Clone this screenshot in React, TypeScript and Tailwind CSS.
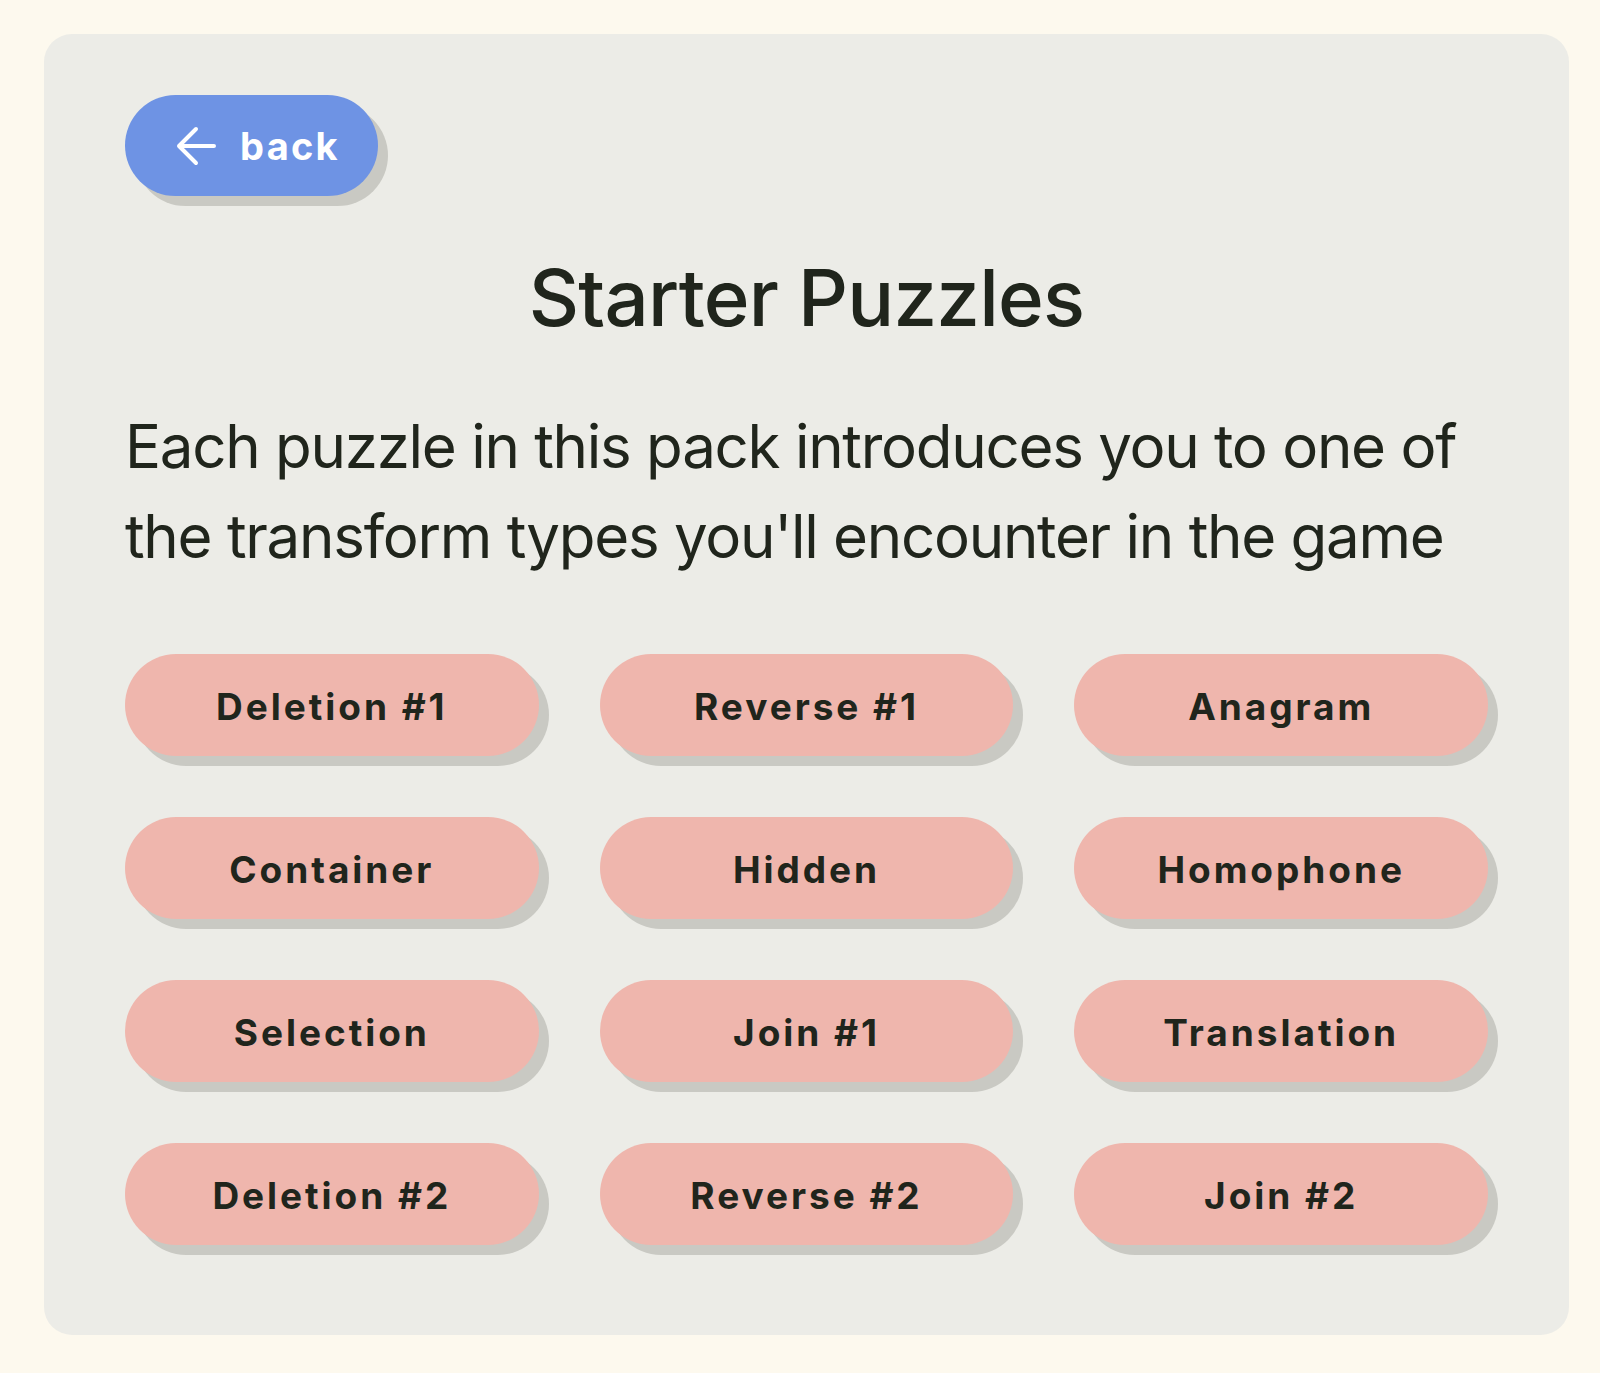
const puzzles = [
  "Deletion #1",
  "Reverse #1",
  "Anagram",
  "Container",
  "Hidden",
  "Homophone",
  "Selection",
  "Join #1",
  "Translation",
  "Deletion #2",
  "Reverse #2",
  "Join #2",
];

function BackArrow() {
  return (
    <svg width="42" height="40" viewBox="0 0 42 40" fill="none">
      <path
        d="M39 20H4M21 3L4 20L21 37"
        stroke="currentColor"
        strokeWidth="4"
        strokeLinecap="round"
        strokeLinejoin="round"
      />
    </svg>
  );
}

export default function App() {
  return (
    <div
      className="min-h-[1373px] bg-[#fdf9ee] pl-[44px] pt-[34px] text-[#20251c]"
      style={{ fontFamily: "Inter, 'Noto Sans', sans-serif" }}
    >
      <section className="w-[1525px] rounded-[28px] bg-[#ecece7] px-[81px] pb-[90px] pt-[61px]">
        <button className="flex h-[101px] w-[253px] items-center justify-center gap-[23px] rounded-full bg-[#6e93e4] pl-[12px] text-white shadow-[10px_10px_0_#c9c9c3]">
          <BackArrow />
          <span className="text-[38px] font-bold leading-none tracking-[0.06em]">
            back
          </span>
        </button>

        <h1 className="mt-[62px] text-center text-[78px] font-medium leading-[80px] tracking-[-0.01em]">
          Starter Puzzles
        </h1>

        <p className="mt-[63px] text-[60px] leading-[90px] tracking-[-0.021em]">
          Each puzzle in this pack introduces you to one of the transform types
          you'll encounter in the game
        </p>

        <div className="mt-[73px] grid grid-cols-3 gap-[61px]">
          {puzzles.map((name) => (
            <button
              key={name}
              className="flex h-[102px] items-center justify-center rounded-full bg-[#efb6ad] pt-[4px] text-[37px] font-bold tracking-[0.08em] shadow-[10px_10px_0_#c9c9c3]"
            >
              {name}
            </button>
          ))}
        </div>
      </section>
    </div>
  );
}
